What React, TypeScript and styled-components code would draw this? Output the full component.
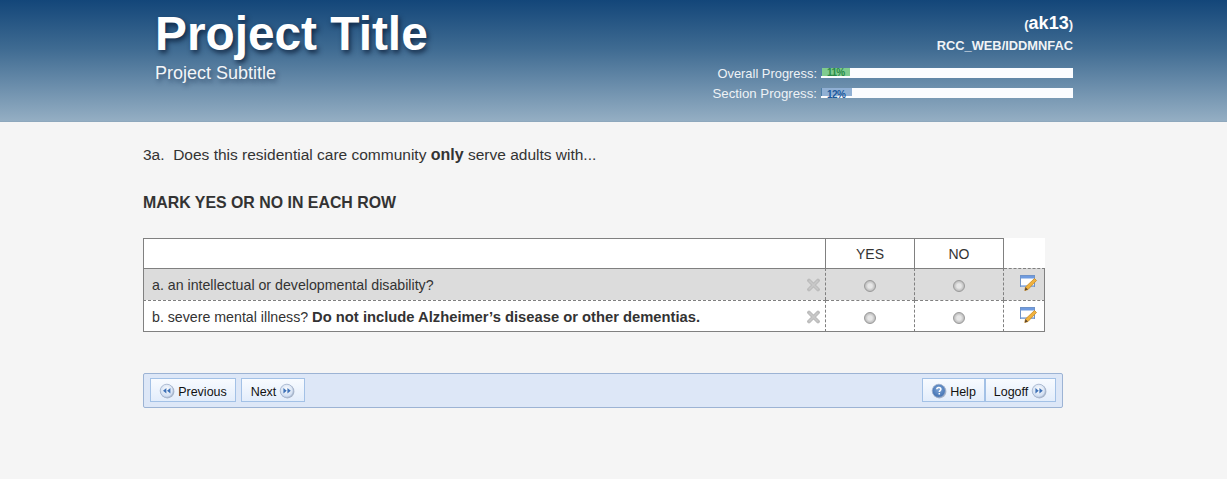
import React from "react";
import styled, { createGlobalStyle } from "styled-components";

const Global = createGlobalStyle`
  html, body { margin: 0; padding: 0; background: #f5f5f5; }
  body { font-family: "Liberation Sans", Arial, sans-serif; color: #333; }
`;

const Banner = styled.header`
  height: 122px;
  box-sizing: border-box;
  padding: 0 154px 0 155px;
  display: flex;
  justify-content: space-between;
  background: linear-gradient(to bottom, #134679 0%, #3f6b92 40%, #94aec3 99%, #8aa3b8 100%);
  color: #fff;
`;
const Brand = styled.div`
  display: flex;
  flex-direction: column;
`;
const Title = styled.h1`
  margin: 6px 0 0;
  font-size: 47.8px;
  line-height: 55px;
  font-weight: 700;
  text-shadow: 2px 3px 5px rgba(8, 24, 50, 0.75);
`;
const Subtitle = styled.div`
  margin-top: 1px;
  font-size: 18px;
  line-height: 22px;
  color: #f2f5f8;
  text-shadow: 2px 3px 4px rgba(10, 30, 60, 0.5);
`;
const Status = styled.div`
  display: flex;
  flex-direction: column;
  align-items: flex-end;
`;
const UserLine = styled.div`
  margin-top: 13px;
  height: 21px;
  line-height: 21px;
  font-size: 13px;
  font-weight: 700;
  color: #f2f5f8;
  b { font-size: 18px; color: #fff; }
`;
const Project = styled.div`
  margin: 3px 0 8px;
  height: 18px;
  line-height: 18px;
  font-size: 12.85px;
  font-weight: 700;
  color: #f0f3f6;
`;
const ProgressRow = styled.div<{ $size: number }>`
  display: flex;
  align-items: center;
  height: 20px;
  gap: 4px;
  font-size: ${(p) => p.$size}px;
  color: #eef2f6;
`;
const Track = styled.div`
  position: relative;
  width: 252px;
  height: 10px;
  background: #fbfcfe;
`;
const Fill = styled.div<{ $color: string }>`
  height: 8px;
  background: ${(p) => p.$color};
  border-left: 1px solid #4f7fa8;
`;
const Percent = styled.span<{ $color: string; $top: number }>`
  position: absolute;
  left: 6px;
  top: ${(p) => p.$top}px;
  font-size: 10px;
  line-height: 10px;
  font-weight: 700;
  letter-spacing: -0.6px;
  color: ${(p) => p.$color};
`;

const Content = styled.main`
  padding: 0 0 0 143px;
  width: 920px;
`;
const Question = styled.p`
  margin: 24px 0 0;
  height: 18px;
  line-height: 18px;
  font-size: 15.5px;
  color: #333;
  b { font-size: 16px; }
`;
const Instruction = styled.h2`
  margin: 30px 0 0;
  height: 18px;
  line-height: 18px;
  font-size: 15.9px;
  font-weight: 700;
  color: #333;
`;
const Grid = styled.table`
  margin-top: 26px;
  border-collapse: separate;
  border-spacing: 0;
  table-layout: fixed;
  width: 902px;
  font-size: 14px;
`;
const HeadCell = styled.th<{ $width: number }>`
  width: ${(p) => p.$width}px;
  box-sizing: border-box;
  height: 30px;
  padding: 0;
  background: #fff;
  font-weight: 400;
  font-size: 14px;
  color: #333;
  border-top: 1px solid #808080;
  border-right: 1px solid #808080;
  &:first-child { border-left: 1px solid #808080; }
`;
const BlankHead = styled.th`
  width: 41px;
  box-sizing: border-box;
  padding: 0;
  background: #fff;
`;
const Row = styled.tr<{ $shade?: boolean }>`
  background: ${(p) => (p.$shade ? "#dcdcdc" : "#fff")};
`;
const Cell = styled.td<{ $last?: boolean }>`
  box-sizing: border-box;
  height: 32px;
  padding: 0;
  text-align: center;
  vertical-align: middle;
  border-top: 1px ${(p) => (p.$last ? "dashed" : "solid")} #808080;
  border-bottom: ${(p) => (p.$last ? "1px solid #808080" : "0")};
  border-right: 1px dashed #808080;
`;
const TextCell = styled(Cell)`
  border-left: 1px solid #808080;
  border-right: 1px dashed #808080;
  text-align: left;
  padding: ${(p) => (p.$last ? "1px" : "0")} 5px 0 8px;
  font-size: 14.2px;
  color: #333;
  b { font-size: 14.75px; }
`;
const IconCell = styled(Cell)`
  border-top: 1px dashed #808080;
  border-right: 1px solid #808080;
  padding-top: ${(p) => (p.$last ? "1px" : "0")};
`;
const CellInner = styled.div`
  display: flex;
  align-items: center;
  justify-content: space-between;
`;
const Radio = styled.span`
  display: block;
  width: 12px;
  height: 12px;
  box-sizing: border-box;
  margin: 3px auto 0;
  border-radius: 50%;
  border: 1px solid #999;
  background: radial-gradient(circle at 50% 50%, #e6e6e6 0 30%, #c6c6c6 60%, #adadad 100%);
`;
const Glyph = styled.svg`
  display: block;
  flex: none;
`;
const NoteWrap = styled.div`
  display: flex;
  justify-content: center;
  margin: -4px 0 0 8px;
`;

const NavBar = styled.nav`
  margin-top: 41px;
  box-sizing: border-box;
  height: 35px;
  width: 920px;
  display: flex;
  align-items: flex-start;
  justify-content: space-between;
  padding: 4px 6px;
  background: #dde7f7;
  border: 1px solid #9cb3d4;
  border-radius: 2px;
`;
const Group = styled.div<{ $gap: number }>`
  display: flex;
  gap: ${(p) => p.$gap}px;
`;
const Btn = styled.button<{ $width: number }>`
  box-sizing: border-box;
  width: ${(p) => p.$width}px;
  height: 24px;
  padding: 0;
  display: flex;
  align-items: center;
  justify-content: center;
  gap: 3px;
  background: linear-gradient(to bottom, #f8fbff, #e3edfb);
  border: 1px solid #a3c1e6;
  font-family: "Liberation Sans", Arial, sans-serif;
  font-size: 12.5px;
  color: #111;
`;
const BtnLabel = styled.span`
  position: relative;
  top: 2px;
`;
const IconNudge = styled.span`
  display: block;
  margin-top: 1px;
`;

const Round = ({ kind }: { kind: "prev" | "next" | "help" }) => (
  <IconNudge>
    <Glyph width="16" height="16" viewBox="0 0 16 16">
      <defs>
        <radialGradient id={`r-${kind}`} cx="50%" cy="40%" r="60%">
          <stop offset="0%" stopColor={kind === "help" ? "#7fa6d8" : "#ffffff"} />
          <stop offset="100%" stopColor={kind === "help" ? "#3f6fb0" : "#c8d8ef"} />
        </radialGradient>
      </defs>
      <circle cx="8.4" cy="8.4" r="7" fill="#7f8ea6" opacity="0.6" />
      <circle cx="7.8" cy="7.8" r="6.6" fill={`url(#r-${kind})`} stroke="#a3b3cc" strokeWidth="0.8" />
      {kind === "prev" && <path d="M7.4 5v5.6L4 7.8zM11.4 5v5.6L8 7.8z" fill="#3f72b8" />}
      {kind === "next" && <path d="M4.4 5v5.6L7.8 7.8zM8.4 5v5.6L11.8 7.8z" fill="#3f72b8" />}
      {kind === "help" && (
        <path d="M5.8 6.2C5.8 5 6.8 4.4 7.8 4.4s2.1.6 2.1 1.8c0 1.4-1.6 1.5-1.6 2.7M8.3 10v1.4" fill="none" stroke="#fff" strokeWidth="1.5" />
      )}
    </Glyph>
  </IconNudge>
);

const Cross = () => (
  <Glyph width="13" height="14" viewBox="0 0 13 14">
    <path d="M2 2.5l9 9M11 2.5l-9 9" stroke="#bcbcbc" strokeWidth="3.8" strokeLinecap="round" />
    <path d="M2.5 3l8 8M10.5 3l-8 8" stroke="#c8c8c8" strokeWidth="1.6" strokeLinecap="round" />
  </Glyph>
);

const Note = () => (
  <Glyph width="17" height="16" viewBox="0 0 17 16">
    <rect x="0.5" y="0.5" width="14" height="11" fill="#fff" stroke="#6f93c8" />
    <rect x="1" y="1" width="13" height="2.5" fill="#6f9be0" />
    <rect x="1" y="10" width="13" height="1.5" fill="#a9c3ea" />
    <path d="M5.5 12l9-8.5 2 2L8 14.5l-3.2 1z" fill="#f0b23e" stroke="#c98a22" strokeWidth="0.8" />
    <path d="M4.8 15.5l.7-3.2 2.5 2.2z" fill="#5a4630" />
  </Glyph>
);

const rows = [
  { shade: true, text: <>a. an intellectual or developmental disability?</> },
  { shade: false, text: <>b. severe mental illness? <b>Do not include Alzheimer’s disease or other dementias.</b></> },
];

export default function App() {
  return (
    <>
      <Global />
      <Banner>
        <Brand>
          <Title>Project Title</Title>
          <Subtitle>Project Subtitle</Subtitle>
        </Brand>
        <Status>
          <UserLine>(<b>ak13</b>)</UserLine>
          <Project>RCC_WEB/IDDMNFAC</Project>
          <ProgressRow $size={12.9}>
            Overall Progress:
            <Track>
              <Fill $color="#7fcb8f" style={{ width: "11%" }} />
              <Percent $color="#2a8a48" $top={0}>11%</Percent>
            </Track>
          </ProgressRow>
          <ProgressRow $size={13.25}>
            Section Progress:
            <Track>
              <Fill $color="#90b0d4" style={{ width: "12%" }} />
              <Percent $color="#1d5a9c" $top={2}>12%</Percent>
            </Track>
          </ProgressRow>
        </Status>
      </Banner>
      <Content>
        <Question>3a.&nbsp; Does this residential care community <b>only</b> serve adults with...</Question>
        <Instruction>MARK YES OR NO IN EACH ROW</Instruction>
        <Grid>
          <thead>
            <tr>
              <HeadCell $width={683} />
              <HeadCell $width={89}>YES</HeadCell>
              <HeadCell $width={89}>NO</HeadCell>
              <BlankHead />
            </tr>
          </thead>
          <tbody>
            {rows.map((r, i) => (
              <Row key={i} $shade={r.shade}>
                <TextCell $last={i === 1}>
                  <CellInner>
                    <span>{r.text}</span>
                    <Cross />
                  </CellInner>
                </TextCell>
                <Cell $last={i === 1}><Radio /></Cell>
                <Cell $last={i === 1}><Radio /></Cell>
                <IconCell $last={i === 1}><NoteWrap><Note /></NoteWrap></IconCell>
              </Row>
            ))}
          </tbody>
        </Grid>
        <NavBar>
          <Group $gap={5}>
            <Btn $width={86}><Round kind="prev" /><BtnLabel>Previous</BtnLabel></Btn>
            <Btn $width={64}><BtnLabel>Next</BtnLabel><Round kind="next" /></Btn>
          </Group>
          <Group $gap={0}>
            <Btn $width={63}><Round kind="help" /><BtnLabel>Help</BtnLabel></Btn>
            <Btn $width={71}><BtnLabel>Logoff</BtnLabel><Round kind="next" /></Btn>
          </Group>
        </NavBar>
      </Content>
    </>
  );
}
